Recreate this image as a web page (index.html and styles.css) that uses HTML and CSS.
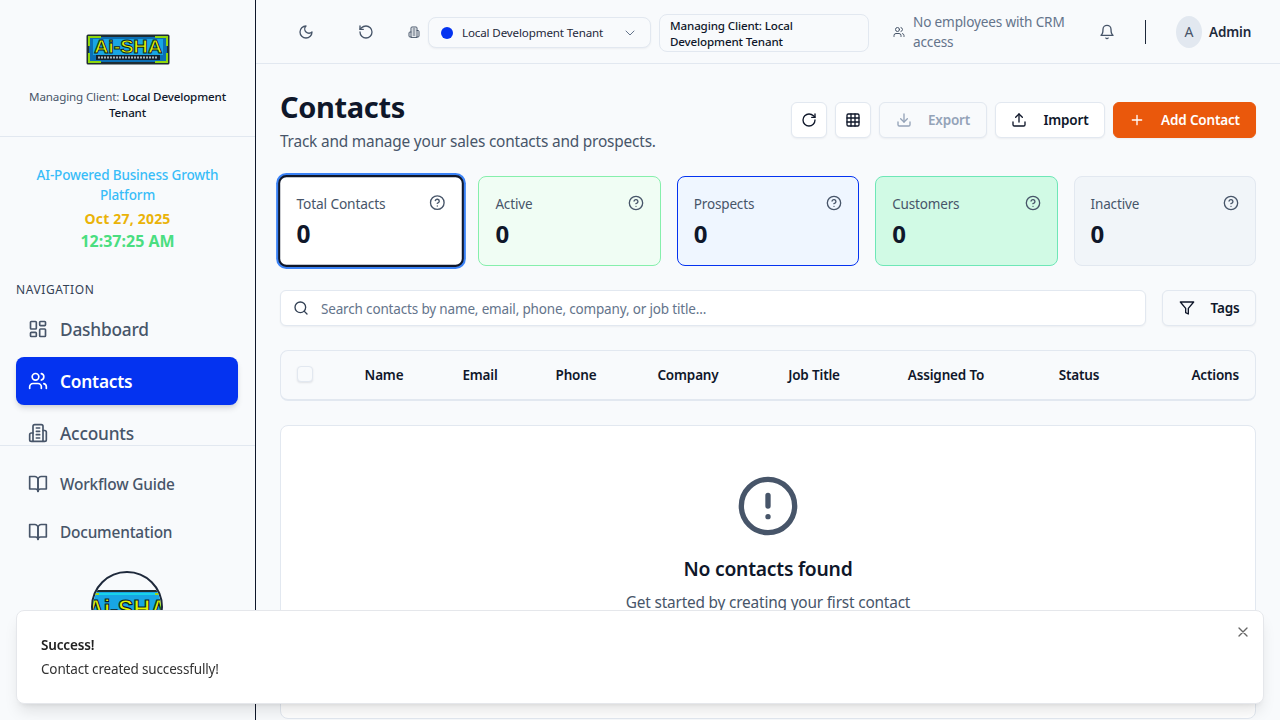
FILE: index.html
```html
<!DOCTYPE html>
<html lang="en">
<head>
<meta charset="utf-8">
<title>Contacts</title>
<link rel="stylesheet" href="styles.css">
</head>
<body>
<svg class="defs" width="0" height="0" aria-hidden="true">
  <defs>
    <symbol id="i-dash" viewBox="0 0 24 24"><rect x="3" y="3" width="7" height="9" rx="1"/><rect x="14" y="3" width="7" height="5" rx="1"/><rect x="14" y="12" width="7" height="9" rx="1"/><rect x="3" y="16" width="7" height="5" rx="1"/></symbol>
    <symbol id="i-users" viewBox="0 0 24 24"><path d="M16 21v-2a4 4 0 0 0-4-4H6a4 4 0 0 0-4 4v2"/><circle cx="9" cy="7" r="4"/><path d="M22 21v-2a4 4 0 0 0-3-3.87"/><path d="M16 3.13a4 4 0 0 1 0 7.75"/></symbol>
    <symbol id="i-building" viewBox="0 0 24 24"><path d="M6 22V4a2 2 0 0 1 2-2h8a2 2 0 0 1 2 2v18Z"/><path d="M6 12H4a2 2 0 0 0-2 2v6a2 2 0 0 0 2 2h2"/><path d="M18 9h2a2 2 0 0 1 2 2v9a2 2 0 0 1-2 2h-2"/><path d="M10 6h4M10 10h4M10 14h4M10 18h4"/></symbol>
    <symbol id="i-book" viewBox="0 0 24 24"><path d="M2 3h6a4 4 0 0 1 4 4v14a3 3 0 0 0-3-3H2z"/><path d="M22 3h-6a4 4 0 0 0-4 4v14a3 3 0 0 1 3-3h7z"/></symbol>
    <symbol id="i-help" viewBox="0 0 24 24"><circle cx="12" cy="12" r="10"/><path d="M9.09 9a3 3 0 0 1 5.83 1c0 2-3 3-3 3"/><path d="M12 17h.01"/></symbol>
  </defs>
</svg>

<div class="app">
  <aside class="sidebar">
    <div class="brand">
      <svg class="logo" viewBox="0 0 84 31" role="img" aria-label="Ai-SHA logo">
        <rect x="0.5" y="0.5" width="83" height="30" rx="1.5" fill="#1f2d33"/>
        <rect x="3" y="3" width="78" height="25" fill="#0b6fb5"/>
        <path d="M3 12V3h12M81 12V3H69M3 19v9h12M81 19v9H69" fill="none" stroke="#8fd80c" stroke-width="2"/>
        <rect x="7" y="5" width="70" height="16" fill="#18a6e4"/>
        <rect x="10" y="21" width="64" height="5" fill="#12202e"/>
        <path d="M12 23.5h60" stroke="#aab6bc" stroke-width="2" stroke-dasharray="2 1"/>
        <text class="logo-text" x="42" y="19" text-anchor="middle" textLength="68" lengthAdjust="spacingAndGlyphs">Ai-SHA</text>
      </svg>
      <p class="managing">Managing Client: <strong>Local Development Tenant</strong></p>
    </div>
    <div class="nav-scroll">
      <div class="tagline">
        <p class="tag-main">AI-Powered Business Growth Platform</p>
        <p class="tag-date">Oct 27, 2025</p>
        <p class="tag-time">12:37:25 AM</p>
      </div>
      <h2 class="nav-title">NAVIGATION</h2>
      <nav class="nav">
        <a class="nav-item"><svg class="ico ico-20"><use href="#i-dash"/></svg>Dashboard</a>
        <a class="nav-item active"><svg class="ico ico-20"><use href="#i-users"/></svg>Contacts</a>
        <a class="nav-item"><svg class="ico ico-20"><use href="#i-building"/></svg>Accounts</a>
      </nav>
    </div>
    <div class="side-bottom">
      <a class="foot-item"><svg class="ico ico-20"><use href="#i-book"/></svg>Workflow Guide</a>
      <a class="foot-item"><svg class="ico ico-20"><use href="#i-book"/></svg>Documentation</a>
      <div class="side-avatar">
        <svg class="side-avatar-art" viewBox="0 0 68 68" role="img" aria-label="Ai-SHA avatar">
          <rect x="0" y="18" width="68" height="40" fill="#18a6e4"/>
          <rect x="0" y="17" width="68" height="2" fill="#1f2d33"/>
          <rect x="6" y="20" width="56" height="2" fill="#19d3e8"/>
          <path d="M0 21h6M62 21h6" stroke="#a6d40f" stroke-width="2"/>
          <text class="avatar-text" x="34" y="45" text-anchor="middle" textLength="80" lengthAdjust="spacingAndGlyphs">Ai-SHA</text>
        </svg>
      </div>
    </div>
  </aside>

  <div class="main">
    <header class="topbar">
      <svg class="ico ico-16 top-moon" viewBox="0 0 24 24"><path d="M12 3a6 6 0 0 0 9 9 9 9 0 1 1-9-9Z"/></svg>
      <svg class="ico ico-16 top-reset" viewBox="0 0 24 24"><path d="M3 12a9 9 0 1 0 9-9 9.75 9.75 0 0 0-6.74 2.74L3 8"/><path d="M3 3v5h5"/></svg>
      <svg class="ico top-building"><use href="#i-building"/></svg>
      <div class="tenant">
        <span class="tenant-dot"></span>
        <span class="tenant-name">Local Development Tenant</span>
        <svg class="ico tenant-chev" viewBox="0 0 24 24"><path d="m6 9 6 6 6-6"/></svg>
      </div>
      <div class="client-box">Managing Client: Local Development Tenant</div>
      <div class="crm">
        <svg class="ico crm-ico"><use href="#i-users"/></svg>
        <span class="crm-text">No employees with CRM access</span>
      </div>
      <svg class="ico ico-16 top-bell" viewBox="0 0 24 24"><path d="M6 8a6 6 0 0 1 12 0c0 7 3 9 3 9H3s3-2 3-9"/><path d="M10.3 21a1.94 1.94 0 0 0 3.4 0"/></svg>
      <span class="top-divider"></span>
      <span class="user-avatar">A</span>
      <span class="user-name">Admin</span>
    </header>

    <main class="content">
      <section class="page-head">
        <div class="page-title">
          <h1>Contacts</h1>
          <p>Track and manage your sales contacts and prospects.</p>
        </div>
        <div class="actions">
          <button class="btn btn-icon"><svg class="ico ico-16" viewBox="0 0 24 24"><path d="M21 12a9 9 0 1 1-9-9c2.52 0 4.93 1 6.74 2.74L21 8"/><path d="M21 3v5h-5"/></svg></button>
          <button class="btn btn-icon"><svg class="ico ico-16" viewBox="0 0 24 24"><rect x="3" y="3" width="18" height="18" rx="2"/><path d="M3 9h18M3 15h18M9 3v18M15 3v18"/></svg></button>
          <button class="btn btn-export"><svg class="ico ico-16" viewBox="0 0 24 24"><path d="M21 15v4a2 2 0 0 1-2 2H5a2 2 0 0 1-2-2v-4"/><path d="m7 10 5 5 5-5"/><path d="M12 15V3"/></svg>Export</button>
          <button class="btn btn-import"><svg class="ico ico-16" viewBox="0 0 24 24"><path d="M21 15v4a2 2 0 0 1-2 2H5a2 2 0 0 1-2-2v-4"/><path d="m17 8-5-5-5 5"/><path d="M12 3v12"/></svg>Import</button>
          <button class="btn btn-add"><svg class="ico ico-16" viewBox="0 0 24 24"><path d="M5 12h14M12 5v14"/></svg>Add Contact</button>
        </div>
      </section>

      <section class="stats">
        <div class="stat stat-total"><div class="stat-top"><span>Total Contacts</span><svg class="ico ico-16"><use href="#i-help"/></svg></div><b>0</b></div>
        <div class="stat stat-active"><div class="stat-top"><span>Active</span><svg class="ico ico-16"><use href="#i-help"/></svg></div><b>0</b></div>
        <div class="stat stat-prospects"><div class="stat-top"><span>Prospects</span><svg class="ico ico-16"><use href="#i-help"/></svg></div><b>0</b></div>
        <div class="stat stat-customers"><div class="stat-top"><span>Customers</span><svg class="ico ico-16"><use href="#i-help"/></svg></div><b>0</b></div>
        <div class="stat stat-inactive"><div class="stat-top"><span>Inactive</span><svg class="ico ico-16"><use href="#i-help"/></svg></div><b>0</b></div>
      </section>

      <section class="filters">
        <label class="search">
          <svg class="ico ico-16" viewBox="0 0 24 24"><circle cx="11" cy="11" r="8"/><path d="m21 21-4.3-4.3"/></svg>
          <span>Search contacts by name, email, phone, company, or job title...</span>
        </label>
        <button class="btn btn-tags"><svg class="ico ico-16" viewBox="0 0 24 24"><path d="M22 3H2l8 9.46V19l4 2v-8.54L22 3z"/></svg>Tags</button>
      </section>

      <section class="table-head">
        <span class="check"></span>
        <span>Name</span><span>Email</span><span>Phone</span><span>Company</span><span>Job Title</span><span>Assigned To</span><span>Status</span><span class="col-end">Actions</span>
      </section>

      <section class="empty">
        <svg class="ico empty-ico" viewBox="0 0 24 24"><circle cx="12" cy="12" r="10"/><path d="M12 8v4M12 16h.01"/></svg>
        <h3>No contacts found</h3>
        <p>Get started by creating your first contact</p>
      </section>
    </main>
  </div>
</div>

<div class="toast">
  <div class="toast-title">Success!</div>
  <div class="toast-msg">Contact created successfully!</div>
  <svg class="ico toast-x" viewBox="0 0 24 24"><path d="M18 6 6 18M6 6l12 12"/></svg>
</div>
</body>
</html>
```
FILE: styles.css
```css
* { box-sizing: border-box; letter-spacing: -.012em; }
html, body { margin: 0; height: 100%; overflow: hidden; }
body { font-family: "Noto Sans", "Open Sans", sans-serif; color: #0f172a; background: #f8fafc; font-size: 13.5px; }
p, h1, h2, h3 { margin: 0; }
.defs { position: absolute; }
.ico { fill: none; stroke: currentColor; stroke-width: 2; stroke-linecap: round; stroke-linejoin: round; flex: none; }
.ico-16 { width: 16px; height: 16px; }
.ico-20 { width: 20px; height: 20px; }

.app { display: flex; height: 720px; overflow: hidden; }

/* Sidebar */
.sidebar { width: 256px; flex: none; height: 720px; overflow: hidden; display: flex; flex-direction: column; background: #f8fafc; border-right: 1px solid #0f172a; }
.brand { flex: none; height: 137px; padding: 34px 16px 0; border-bottom: 1px solid #e2e8f0; text-align: center; }
.logo { display: block; width: 84px; height: 31px; margin: 0 auto 24px; }
.logo-text { font-family: "Liberation Sans", sans-serif; font-weight: 700; font-size: 19px; fill: #e2f500; stroke: #0b1a24; stroke-width: .9px; }
.avatar-text { font-family: "Liberation Sans", sans-serif; font-weight: 700; font-size: 26px; fill: #e2f500; stroke: #0b1a24; stroke-width: 1.2px; }
.managing { font-size: 11.6px; line-height: 16px; color: #475569; }
.managing strong { font-weight: 500; color: #0f172a; }
.nav-scroll { flex: none; height: 308px; overflow: hidden; }
.tagline { padding: 28px 16px 0; text-align: center; font-weight: 500; }
.tag-main { font-size: 13.5px; line-height: 20px; color: #38bdf8; }
.tag-date { font-size: 14px; line-height: 20px; margin-top: 4px; font-weight: 700; color: #eab308; letter-spacing: .2px; }
.tag-time { font-size: 16px; line-height: 24px; font-weight: 700; color: #4ade80; letter-spacing: 0; }
.nav-title { font-size: 12px; line-height: 16px; font-weight: 400; letter-spacing: .6px; color: #334155; padding: 29px 16px 0; }
.nav { display: flex; flex-direction: column; gap: 4px; padding: 7px 17px 0 16px; }
.nav-item { display: flex; align-items: center; gap: 12px; height: 48px; padding: 0 12px; border-radius: 8px; font-size: 17.3px; font-weight: 500; color: #475569; }
.nav-item.active { background: #0433f0; color: #fff; font-weight: 600; box-shadow: 0 4px 6px -1px rgba(15,23,42,.14), 0 2px 4px -2px rgba(15,23,42,.12); }
.side-bottom { flex: 1; border-top: 1px solid #e2e8f0; padding: 14px 18px 0 16px; }
.foot-item { display: flex; align-items: center; gap: 12px; height: 48px; padding: 0 12px; font-size: 15.4px; font-weight: 500; color: #475569; }
.side-avatar { width: 72px; height: 72px; margin: 15px auto 0; border-radius: 50%; border: 2px solid #1e293b; background: #f8fafc; overflow: hidden; }
.side-avatar-art { display: block; width: 100%; height: 100%; }

/* Top bar */
.main { flex: 1; min-width: 0; display: flex; flex-direction: column; }
.topbar { flex: none; height: 64px; display: flex; align-items: center; padding: 0 0 0 42px; border-bottom: 1px solid #e2e8f0; background: #f8fafc; color: #475569; }
.top-reset { margin-left: 44px; }
.top-building { width: 12px; height: 14px; margin-left: 34px; stroke-width: 2; }
.tenant { flex: none; width: 223px; height: 31px; margin: 2px 0 0 8px; display: flex; align-items: center; padding: 0 12px 0 12px; background: #f8fafc; border: 1px solid #e2e8f0; border-radius: 8px; box-shadow: 0 1px 2px rgba(15,23,42,.05); }
.tenant-dot { width: 12px; height: 12px; border-radius: 50%; background: #0433f0; flex: none; }
.tenant-name { margin-left: 9px; font-size: 11.6px; color: #1e293b; flex: 1; white-space: nowrap; }
.tenant-chev { width: 16px; height: 16px; color: #64748b; stroke-width: 1.5; }
.client-box { flex: none; width: 210px; height: 38px; margin: 2px 0 0 8px; padding: 3px 10px; font-size: 11.6px; line-height: 16px; font-weight: 500; color: #0f172a; border: 1px solid #e2e8f0; border-radius: 8px; }
.crm { flex: none; width: 180px; margin-left: 24px; display: flex; align-items: center; gap: 8px; color: #64748b; }
.crm-ico { width: 12px; height: 12px; color: #475569; }
.crm-text { font-size: 13.6px; line-height: 20px; }
.top-bell { margin-left: 26px; }
.top-divider { flex: none; width: 1px; height: 24px; background: #1e293b; margin-left: 30px; }
.user-avatar { width: 26px; height: 32px; margin-left: 30px; border-radius: 50%; background: #e2e8f0; display: flex; align-items: center; justify-content: center; font-size: 14px; color: #475569; flex: none; }
.user-name { margin-left: 7px; font-size: 13.5px; font-weight: 600; color: #1e293b; }

/* Content */
.content { flex: 1; min-height: 0; padding: 24px; overflow: hidden; }
.page-head { display: flex; justify-content: space-between; align-items: flex-start; height: 64px; }
.page-title { padding-top: 1px; }
.page-title h1 { font-size: 29px; line-height: 36px; font-weight: 700; color: #0f172a; }
.page-title p { font-size: 15.4px; line-height: 24px; color: #475569; margin-top: 5px; }
.actions { display: flex; gap: 8px; margin-top: 14px; }
.btn { height: 36px; display: inline-flex; align-items: center; justify-content: center; border-radius: 6px; border: 1px solid #e2e8f0; background: #fff; font: 600 13.5px "Noto Sans", sans-serif; color: #0f172a; padding: 0; box-shadow: 0 1px 2px rgba(15,23,42,.05); }
.btn-icon { width: 36px; }
.btn-export { width: 108px; gap: 16px; color: #94a3b8; background: #f8fafc; }
.btn-import { width: 110px; gap: 16px; }
.btn-add { width: 143px; gap: 16px; background: #ea580c; border-color: #ea580c; color: #fff; }
.stats { display: grid; grid-template-columns: repeat(5, 1fr); gap: 16px; margin-top: 24px; }
.stat { height: 90px; padding: 16px 16px 0 16px; border: 1px solid #e2e8f0; border-radius: 8px; }
.stat-top { display: flex; justify-content: space-between; align-items: center; height: 20px; font-size: 13.5px; color: #475569; }
.stat-top span { padding-top: 1px; }
.stat b { display: block; margin-top: 5px; font-size: 24px; line-height: 32px; font-weight: 700; color: #0f172a; letter-spacing: 0; }
.stat-total { background: #fff; border: 2px solid #0f172a; box-shadow: 0 0 0 2px #3b82f6; padding: 15px 16px 0 16px; transform: scale(1.02); }
.stat-active { background: #f0fdf4; border-color: #86efac; }
.stat-prospects { background: #eff6ff; border-color: #0433f0; }
.stat-customers { background: #d1fae5; border-color: #6ee7b7; }
.stat-inactive { background: #f1f5f9; border-color: #e2e8f0; }
.filters { display: flex; gap: 16px; margin-top: 24px; }
.search { flex: 1; height: 36px; display: flex; align-items: center; gap: 12px; padding: 0 12px; background: #fff; border: 1px solid #e2e8f0; border-radius: 6px; color: #334155; box-shadow: 0 1px 2px rgba(15,23,42,.05); }
.search span { font-size: 13.5px; color: #64748b; white-space: nowrap; padding-top: 2px; }
.btn-tags { width: 94px; gap: 16px; background: #f8fafc; }
.table-head { display: grid; grid-template-columns: 47px 80px 112px 80px 144px 108px 156px 110px 1fr; align-items: center; height: 51px; margin-top: 24px; padding: 0 16px 1px; text-align: center; font-size: 13.5px; font-weight: 600; color: #0f172a; border: 1px solid #e2e8f0; border-bottom-width: 2px; border-radius: 8px; }
.col-end { text-align: right; }
.check { width: 16px; height: 16px; margin-top: -2px; border: 1px solid #e2e8f0; border-radius: 4px; background: #f8fafc; box-shadow: 0 1px 2px rgba(15,23,42,.1); }
.empty { height: 294px; margin-top: 24px; padding-top: 48px; text-align: center; background: #fff; border: 1px solid #e2e8f0; border-radius: 8px; }
.empty-ico { display: block; width: 64px; height: 64px; margin: 0 auto; color: #475569; }
.empty h3 { font-size: 19.3px; line-height: 28px; font-weight: 600; color: #0f172a; margin-top: 17px; }
.empty p { font-size: 15.4px; line-height: 24px; color: #475569; margin-top: 8px; }

/* Toast */
.toast { position: fixed; left: 16px; top: 610px; width: 1248px; height: 94px; padding: 24px; background: #fff; border: 1px solid #e5e7eb; border-radius: 8px; box-shadow: 0 10px 15px -3px rgba(0,0,0,.1), 0 4px 6px -4px rgba(0,0,0,.1); color: #333; }
.toast-title { font-size: 13.5px; line-height: 20px; font-weight: 600; color: #222; }
.toast-msg { font-size: 13.5px; line-height: 20px; margin-top: 4px; }
.toast-x { position: absolute; top: 13px; right: 12px; width: 16px; height: 16px; color: #666; stroke-width: 2; }
```
